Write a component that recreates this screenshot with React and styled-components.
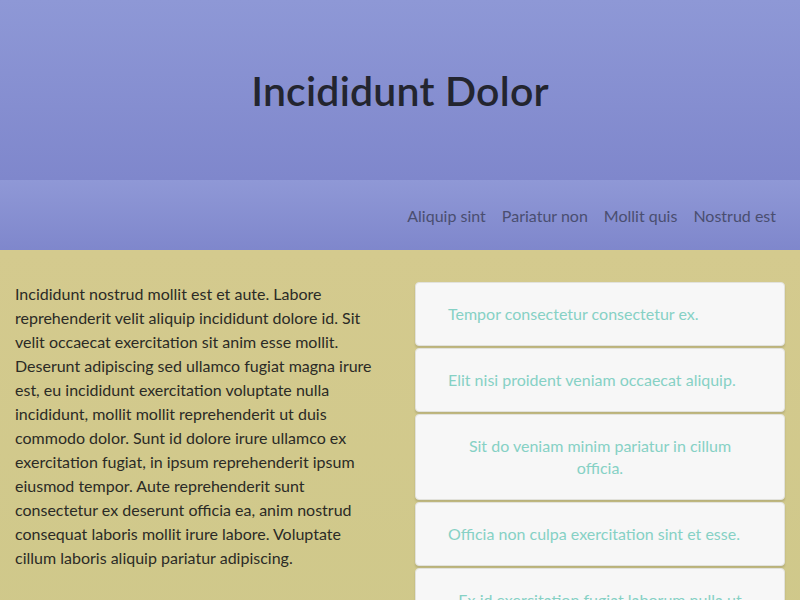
import React from "react";
import styled, { createGlobalStyle } from "styled-components";

const GlobalStyle = createGlobalStyle`
  html, body { margin: 0; padding: 0; }
  body {
    font-family: Lato, "Liberation Sans", sans-serif;
    background: #d0c88a;
    overflow: hidden;
  }
  * { box-sizing: border-box; }
`;

const Page = styled.div`
  width: 800px;
  height: 600px;
  display: flex;
  flex-direction: column;
  overflow: hidden;
`;

const Header = styled.header`
  height: 180px;
  flex: none;
  display: flex;
  align-items: center;
  justify-content: center;
  background: linear-gradient(to bottom, #8e98d6, #7f87cc);
`;

const Title = styled.h1`
  margin: 0;
  font-size: 41px;
  font-weight: 600;
  color: #23252f;
  letter-spacing: 0.2px;
`;

const Nav = styled.nav`
  height: 70px;
  flex: none;
  display: flex;
  align-items: center;
  justify-content: flex-end;
  gap: 16px;
  padding: 0 24px;
  background: linear-gradient(to bottom, #8f98d6, #7f87cc);
`;

const NavLink = styled.a`
  font-size: 16px;
  color: #4a4e70;
  text-decoration: none;
`;

const Main = styled.main`
  flex: 1;
  display: grid;
  grid-template-columns: 370px 370px;
  column-gap: 30px;
  align-items: start;
  padding: 32px 15px 0;
  background: linear-gradient(to bottom, #d4ca8e, #cfc88a);
`;

const Text = styled.p`
  margin: 0;
  font-size: 16px;
  line-height: 24px;
  color: #2b2b26;
`;

const CardList = styled.div`
  display: flex;
  flex-direction: column;
  gap: 2px;
`;

const Card = styled.div`
  background: #f7f7f7;
  border: 1px solid #e2e2dc;
  border-radius: 4px;
  box-shadow: 0 2px 2px rgba(0, 0, 0, 0.12);
  padding: 20px 32px;
  font-size: 16px;
  line-height: 22px;
  color: #86d1c5;
  text-align: ${(p) => (p.$center ? "center" : "left")};
`;

const links = ["Aliquip sint", "Pariatur non", "Mollit quis", "Nostrud est"];

const cards = [
  { text: "Tempor consectetur consectetur ex.", center: false },
  { text: "Elit nisi proident veniam occaecat aliquip.", center: false },
  { text: "Sit do veniam minim pariatur in cillum officia.", center: true },
  { text: "Officia non culpa exercitation sint et esse.", center: false },
  { text: "Ex id exercitation fugiat laborum nulla ut aliqua.", center: true },
];

export default function App() {
  return (
    <Page>
      <GlobalStyle />
      <Header>
        <Title>Incididunt Dolor</Title>
      </Header>
      <Nav>
        {links.map((l) => (
          <NavLink key={l} href="#">
            {l}
          </NavLink>
        ))}
      </Nav>
      <Main>
        <Text>
          Incididunt nostrud mollit est et aute. Labore reprehenderit velit aliquip incididunt dolore id. Sit
          velit occaecat exercitation sit anim esse mollit. Deserunt adipiscing sed ullamco fugiat magna irure
          est, eu incididunt exercitation voluptate nulla incididunt, mollit mollit reprehenderit ut duis
          commodo dolor. Sunt id dolore irure ullamco ex exercitation fugiat, in ipsum reprehenderit ipsum
          eiusmod tempor. Aute reprehenderit sunt consectetur ex deserunt officia ea, anim nostrud consequat
          laboris mollit irure labore. Voluptate cillum laboris aliquip pariatur adipiscing.
        </Text>
        <CardList>
          {cards.map((c) => (
            <Card key={c.text} $center={c.center}>
              {c.text}
            </Card>
          ))}
        </CardList>
      </Main>
    </Page>
  );
}
